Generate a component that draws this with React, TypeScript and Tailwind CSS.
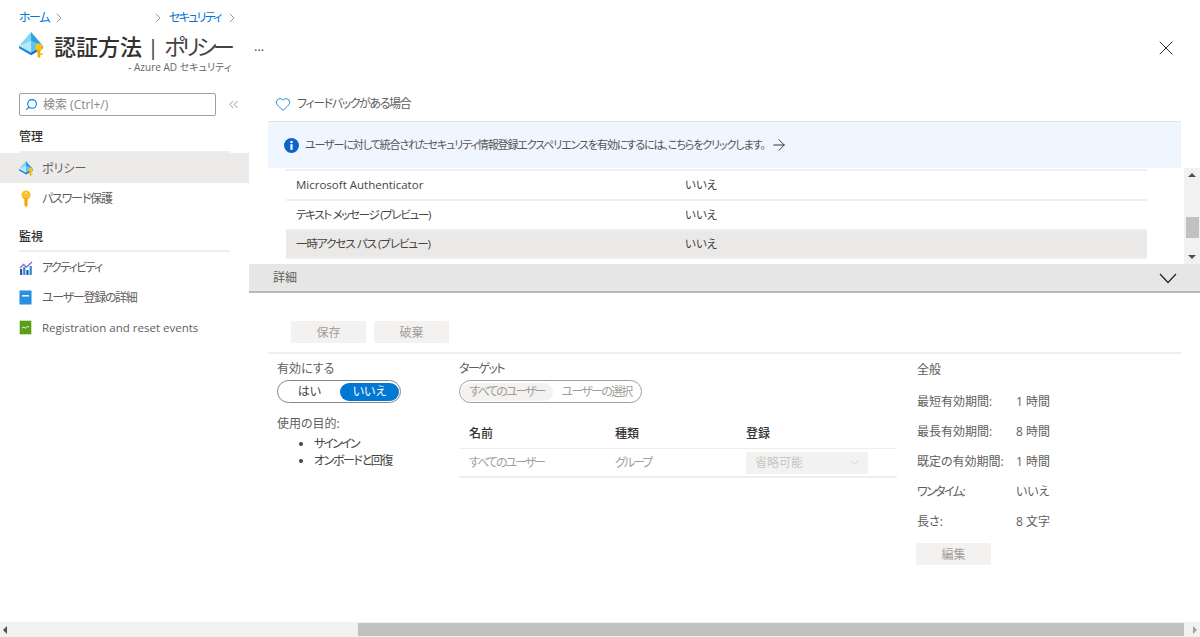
import { ArrowRight, ChevronDown, ChevronRight, ChevronsLeft, Heart, Search, X } from "lucide-react";

const font = { fontFamily: '"Open Sans", "Noto Sans CJK JP", sans-serif' };

function AuthIcon({ size }: { size: number }) {
  return (
    <svg width={size} height={size} viewBox="0 0 28 28" className="shrink-0">
      <path d="M13 0 L0 15 L13 10 Z" fill="#7fd6f5" />
      <path d="M13 0 L26 15 L13 10 Z" fill="#2f9fe0" />
      <path d="M13 10 L0 15 L13 22 Z" fill="#b5e8fa" />
      <path d="M13 10 L26 15 L13 22 Z" fill="#5cc2ee" />
      <path d="M0 15 L13 22 L13 25 L0 17.5 Z" fill="#1b87cf" />
      <path d="M26 15 L13 22 L13 25 L26 17.5 Z" fill="#1470b5" />
      <circle cx="21.5" cy="16.5" r="4" fill="#f9c21a" />
      <path d="M20 19 H23 V27 L21.5 28 L20 27 Z" fill="#eeb000" />
      <rect x="23" y="23" width="2.4" height="1.6" fill="#eeb000" />
    </svg>
  );
}

function KeyIcon() {
  return (
    <svg width="14" height="18" viewBox="0 0 14 18" className="shrink-0">
      <circle cx="7" cy="5" r="4.6" fill="#fbc02d" />
      <circle cx="7" cy="3.2" r="1" fill="#fff3c4" />
      <path d="M5.4 8 H8.6 V15 L7 17.5 L5.4 15 Z" fill="#f2a900" />
    </svg>
  );
}

function ActivityIcon() {
  return (
    <svg width="14" height="14" viewBox="0 0 14 14" className="shrink-0">
      <path d="M1 7 L4.5 3.5 L7.5 6 L13 1" fill="none" stroke="#a35fd0" strokeWidth="1.4" />
      <rect x="1" y="8" width="2.2" height="6" fill="#3b4fa8" />
      <rect x="4.2" y="6" width="2.2" height="8" fill="#1f8fd8" />
      <rect x="7.4" y="9" width="2.2" height="5" fill="#3b4fa8" />
      <rect x="10.6" y="5" width="2.2" height="9" fill="#1f8fd8" />
    </svg>
  );
}

function BookIcon({ green }: { green?: boolean }) {
  return (
    <svg width="13" height="15" viewBox="0 0 13 15" className="shrink-0">
      <rect x="0.5" y="0.5" width="12" height="14" rx="1" fill={green ? "#5a9e1c" : "#2a8fe0"} stroke={green ? "#cfe3bb" : "#8cc4ee"} />
      {green ? (
        <path d="M3 8 L5 7 L6.5 8.5 L8 6.5 L10 7" fill="none" stroke="#e4f2d3" strokeWidth="1" />
      ) : (
        <rect x="3" y="5" width="7" height="1.6" fill="#e4f2fc" />
      )}
    </svg>
  );
}

function InfoIcon() {
  return (
    <svg width="15" height="15" viewBox="0 0 15 15" className="shrink-0">
      <circle cx="7.5" cy="7.5" r="7.5" fill="#0f62c9" />
      <rect x="6.4" y="6.2" width="2.2" height="5.6" fill="#fff" />
      <circle cx="7.5" cy="3.9" r="1.25" fill="#fff" />
    </svg>
  );
}

function NavRow({ icon, label, active, labelClass }: { icon: React.ReactNode; label: string; active?: boolean; labelClass?: string }) {
  return (
    <div className={`flex h-[30px] items-center pl-[19px] pt-[1px] text-[12px] text-[#605e5c] ${active ? "bg-[#edebe9]" : ""}`}>
      <span className="flex w-[23px] items-center">{icon}</span>
      <span className={labelClass}>{label}</span>
    </div>
  );
}

function TableRow({ name, active, nameClass }: { name: string; active?: boolean; nameClass?: string }) {
  return (
    <div className={`flex h-[30px] items-center border-t-2 border-[#eeeeee] pl-[10px] text-[11.5px] text-[#444] ${active ? "bg-[#ebe9e7] border-b-2" : ""}`}>
      <span className={`w-[389px] ${nameClass ?? ""}`}>{name}</span>
      <span>いいえ</span>
    </div>
  );
}

function PropRow({ label, value, labelClass }: { label: string; value: string; labelClass?: string }) {
  return (
    <div className="flex h-[30px] items-center text-[12px] text-[#605e5c]">
      <span className={`w-[99px] ${labelClass ?? ""}`}>{label}</span>
      <span>{value}</span>
    </div>
  );
}

function GrayButton({ label }: { label: string }) {
  return (
    <div className="flex h-[22px] w-[75px] items-center justify-center rounded-[2px] bg-[#f3f2f1] pt-[1px] text-[12px] text-[#a19f9d]">
      {label}
    </div>
  );
}

export default function App() {
  return (
    <div className="flex h-[637px] w-[1200px] flex-col overflow-hidden bg-white [font-feature-settings:'palt']" style={font}>
      <div className="flex h-[88px] shrink-0">
        <div className="w-[249px] pl-[19px] pt-[10px]">
          <div className="flex h-[15px] items-center whitespace-nowrap text-[12px] text-[#0078d4]">
            <span className="tracking-[-1.5px]">ホーム</span>
            <ChevronRight size={16} strokeWidth={1} className="ml-[2px] text-[#666]" />
            <ChevronRight size={16} strokeWidth={1} className="ml-[83px] text-[#666]" />
            <span className="ml-[3px] tracking-[-1.7px]">セキュリティ</span>
            <ChevronRight size={16} strokeWidth={1} className="ml-[3px] text-[#666]" />
          </div>
          <div className="mt-[7px] flex items-start">
            <AuthIcon size={26} />
            <div className="ml-[9px] flex flex-col items-end">
              <div className="-mt-[2px] flex text-[22px] font-medium leading-[32px] whitespace-nowrap text-[#323130]">
                <span>認証方法</span>
                <span className="ml-[5px] font-normal text-[#444]">|</span>
                <span className="ml-[5px] font-normal tracking-[-3.5px] text-[#444]">ポリシー</span>
              </div>
              <div className="-mt-[2px] text-[10px] leading-[14px] text-[#666]">- Azure AD セキュリティ</div>
            </div>
          </div>
        </div>
        <div className="flex flex-1 justify-between pl-[5px] pr-[22px] pt-[36px]">
          <span className="text-[13px] leading-[20px] text-[#444]">...</span>
          <X size={24} strokeWidth={1} className="text-[#323130]" />
        </div>
      </div>

      <div className="flex min-h-0 flex-1">
        <aside className="w-[249px] shrink-0">
          <div className="flex items-center pl-[19px] pt-[5px]">
            <div className="flex h-[23px] w-[197px] items-center rounded-[2px] border border-[#a19f9d] pl-[5px] text-[12px] text-[#8a8886]">
              <Search size={13} className="-scale-x-100 text-[#0078d4]" />
              <span className="ml-[5px]">検索 (Ctrl+/)</span>
            </div>
            <ChevronsLeft size={15} strokeWidth={1.2} className="ml-[10px] text-[#777]" />
          </div>
          <div className="mx-[19px] mt-[13px] border-b-2 border-[#eeeeee] pb-[6px] text-[12px] font-medium leading-[16px] text-[#323130]">管理</div>
          <NavRow active icon={<AuthIcon size={15} />} label="ポリシー" />
          <NavRow icon={<KeyIcon />} label="パスワード保護" labelClass="tracking-[-1.2px]" />
          <div className="mx-[19px] mt-[16px] border-b-2 border-[#eeeeee] pb-[5px] text-[12px] font-medium leading-[16px] text-[#323130]">監視</div>
          <NavRow icon={<ActivityIcon />} label="アクティビティ" labelClass="tracking-[-1.7px]" />
          <NavRow icon={<BookIcon />} label="ユーザー登録の詳細" labelClass="tracking-[-1.3px]" />
          <NavRow icon={<BookIcon green />} label="Registration and reset events" labelClass="text-[11.5px]" />
        </aside>

        <main className="flex min-w-0 flex-1 flex-col">
          <div className="flex h-[33px] items-center pb-[2px] pl-[26px] text-[12px] text-[#605e5c]">
            <Heart size={16} strokeWidth={1.3} className="text-[#0078d4]" />
            <span className="ml-[6px] tracking-[-1.4px]">フィードバックがある場合</span>
          </div>
          <div className="mx-[19px] flex h-[47px] items-center border-t border-[#e3e3e3] bg-[#eff6ff] pl-[16px] text-[11px] text-[#555]">
            <InfoIcon />
            <span className="ml-[6px] tracking-[-1.1px]">ユーザーに対して統合されたセキュリティ情報登録エクスペリエンスを有効にするには、こちらをクリックします。</span>
            <ArrowRight size={18} strokeWidth={1.2} className="ml-[5px] text-[#222]" />
          </div>

          <div className="flex h-[96px] justify-between">
            <div className="ml-[37px] w-[861px] pt-[1px]">
              <TableRow name="Microsoft Authenticator" />
              <TableRow name="テキスト メッセージ (プレビュー)" nameClass="tracking-[-1.3px]" />
              <TableRow active name="一時アクセス パス (プレビュー)" nameClass="tracking-[-1px]" />
            </div>
            <div className="flex w-[16px] flex-col items-center justify-between bg-[#f1f1f1] py-[5px]">
              <span className="h-0 w-0 border-x-[4px] border-b-[4px] border-x-transparent border-b-[#505050]" />
              <span className="mt-[23px] h-[21px] w-[13px] bg-[#c1c1c1]" />
              <span className="h-0 w-0 border-x-[4px] border-t-[4px] border-x-transparent border-t-[#505050]" />
            </div>
          </div>

          <div className="flex h-[29px] items-center justify-between border-b-2 border-[#b9b9b9] bg-[#e6e6e6] pl-[24px] pr-[23px] pt-[1px] text-[12px] text-[#605e5c]">
            <span>詳細</span>
            <svg width="18" height="11" viewBox="0 0 18 11">
              <path d="M1 1 L9 9.5 L17 1" fill="none" stroke="#222" strokeWidth="1.2" />
            </svg>
          </div>

          <div className="mt-[28px] flex gap-[8px] pl-[42px]">
            <GrayButton label="保存" />
            <GrayButton label="破棄" />
          </div>

          <div className="mx-[19px] mt-[9px] flex border-t-2 border-[#eeeeee] pt-[7px]">
            <div className="ml-[9px] w-[182px] text-[12px] text-[#605e5c]">
              <div className="leading-[16px]">有効にする</div>
              <div className="mt-[3px] flex h-[23px] w-[124px] items-center rounded-full border border-[#8a8886] p-[1px]">
                <span className="flex w-[61px] justify-center text-[#444]">はい</span>
                <span className="flex h-[18px] w-[59px] items-center justify-center rounded-full bg-[#0078d4] text-white">いいえ</span>
              </div>
              <div className="mt-[13px] leading-[16px]">使用の目的:</div>
              <ul className="mt-[3px] ml-[37px] list-disc pl-0 leading-[17px] text-[#444]">
                <li className="tracking-[-1.8px]">サインイン</li>
                <li className="tracking-[-1.4px]">オンボードと回復</li>
              </ul>
            </div>

            <div className="w-[438px] text-[12px]">
              <div className="leading-[16px] tracking-[-1.5px] text-[#605e5c]">ターゲット</div>
              <div className="mt-[3px] flex h-[23px] w-[183px] items-center rounded-full border border-[#a19f9d] p-[1px] whitespace-nowrap text-[#a19f9d]">
                <span className="flex h-[18px] w-[92px] items-center justify-center rounded-full bg-[#f3f2f1] tracking-[-2px]">すべてのユーザー</span>
                <span className="flex flex-1 justify-center tracking-[-1.7px]">ユーザーの選択</span>
              </div>
              <div className="mt-[19px] flex h-[27px] items-center border-b border-[#eeeeee] pb-[2px] pl-[10px] font-medium text-[#323130]">
                <span className="w-[146px]">名前</span>
                <span className="w-[131px]">種類</span>
                <span>登録</span>
              </div>
              <div className="flex h-[29px] items-center border-b-2 border-[#eeeeee] pl-[10px] text-[#a19f9d]">
                <span className="w-[146px] tracking-[-2px]">すべてのユーザー</span>
                <span className="w-[131px] tracking-[-2px]">グループ</span>
                <div className="flex h-[22px] w-[122px] items-center justify-between bg-[#f3f2f1] pl-[9px] pr-[6px] text-[#c8c6c4]">
                  省略可能
                  <ChevronDown size={15} strokeWidth={1} />
                </div>
              </div>
            </div>

            <div className="ml-[20px] flex-1">
              <div className="flex h-[17px] items-center text-[12px] text-[#605e5c]">全般</div>
              <div className="mt-[9px]">
                <PropRow label="最短有効期間:" value="1 時間" />
                <PropRow label="最長有効期間:" value="8 時間" />
                <PropRow label="既定の有効期間:" value="1 時間" />
                <PropRow label="ワンタイム:" value="いいえ" labelClass="tracking-[-1.6px]" />
                <PropRow label="長さ:" value="8 文字" />
              </div>
              <div className="-ml-[1px] mt-[6px]">
                <GrayButton label="編集" />
              </div>
            </div>
          </div>
        </main>
      </div>

      <div className="flex h-[15px] shrink-0 items-center bg-[#f1f1f1]">
        <span className="ml-[3px] h-0 w-0 border-y-[4px] border-r-[4px] border-y-transparent border-r-[#505050]" />
        <span className="ml-[351px] h-[13px] w-[826px] bg-[#c1c1c1]" />
        <span className="ml-auto mr-[3px] h-0 w-0 border-y-[4px] border-l-[4px] border-y-transparent border-l-[#a0a0a0]" />
      </div>
    </div>
  );
}
